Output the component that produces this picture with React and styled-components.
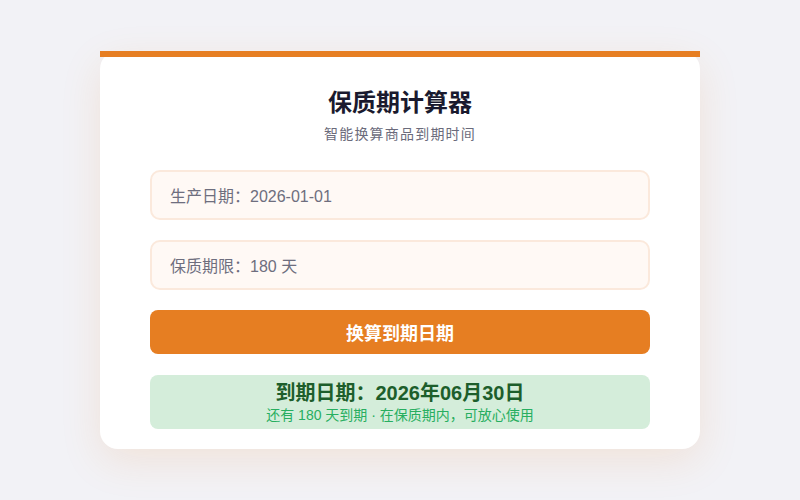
import styled, { createGlobalStyle } from "styled-components"

const GlobalStyle = createGlobalStyle`
  * {
    box-sizing: border-box;
  }
  body {
    margin: 0;
    background: #f2f2f6;
    font-family: "Liberation Sans", "Noto Sans CJK SC", sans-serif;
  }
`

function App() {
  return (
    <>
      <GlobalStyle />
      <Page>
        <Card>
          <Header>
            <Title>保质期计算器</Title>
            <Subtitle>智能换算商品到期时间</Subtitle>
          </Header>
          <Form>
            <Field readOnly value='生产日期：2026-01-01' />
            <Field readOnly value='保质期限：180 天' />
            <Button type='button'>换算到期日期</Button>
            <Result>
              <ResultTitle>到期日期：2026年06月30日</ResultTitle>
              <ResultNote>还有 180 天到期 · 在保质期内，可放心使用</ResultNote>
            </Result>
          </Form>
        </Card>
      </Page>
    </>
  )
}

export default App

const Page = styled.div`
  min-height: 100vh;
  display: flex;
  align-items: center;
  justify-content: center;
`

const Card = styled.div`
  position: relative;
  width: 600px;
  background: #fff;
  border-radius: 18px;
  padding: 40px 50px 20px;
  box-shadow: 0 12px 40px rgba(230, 126, 34, 0.13);

  &::before {
    content: "";
    position: absolute;
    top: 0;
    left: 0;
    right: 0;
    height: 6px;
    background: #e67e22;
  }
`

const Header = styled.div`
  text-align: center;
  margin-bottom: 27px;
`

const Title = styled.h1`
  margin: 0;
  height: 24px;
  font-size: 24px;
  line-height: 24px;
  font-weight: 700;
  color: #1a1a2e;
`

const Subtitle = styled.p`
  margin: 10px 0 0;
  height: 18px;
  font-size: 14px;
  line-height: 18px;
  letter-spacing: 1.2px;
  color: #6b6b7b;
`

const Form = styled.div`
  display: flex;
  flex-direction: column;
  gap: 20px;
`

const Field = styled.input`
  height: 50px;
  width: 100%;
  padding: 0 18px;
  border: 2px solid #fbe9dc;
  border-radius: 10px;
  background: #fff9f5;
  font-family: inherit;
  font-size: 16px;
  color: #6e6e7e;
  outline: none;
`

const Button = styled.button`
  height: 44px;
  border: none;
  border-radius: 8px;
  background: #e67e22;
  color: #fff;
  font-family: inherit;
  font-size: 18px;
  font-weight: 700;
  cursor: pointer;
`

const Result = styled.div`
  margin-top: 1px;
  padding: 5px 16px 4px;
  border-radius: 8px;
  background: #d4edda;
  text-align: center;
`

const ResultTitle = styled.div`
  font-size: 20px;
  line-height: 26px;
  font-weight: 700;
  color: #1d5e2b;
`

const ResultNote = styled.div`
  font-size: 14px;
  line-height: 19px;
  color: #27ae60;
`
